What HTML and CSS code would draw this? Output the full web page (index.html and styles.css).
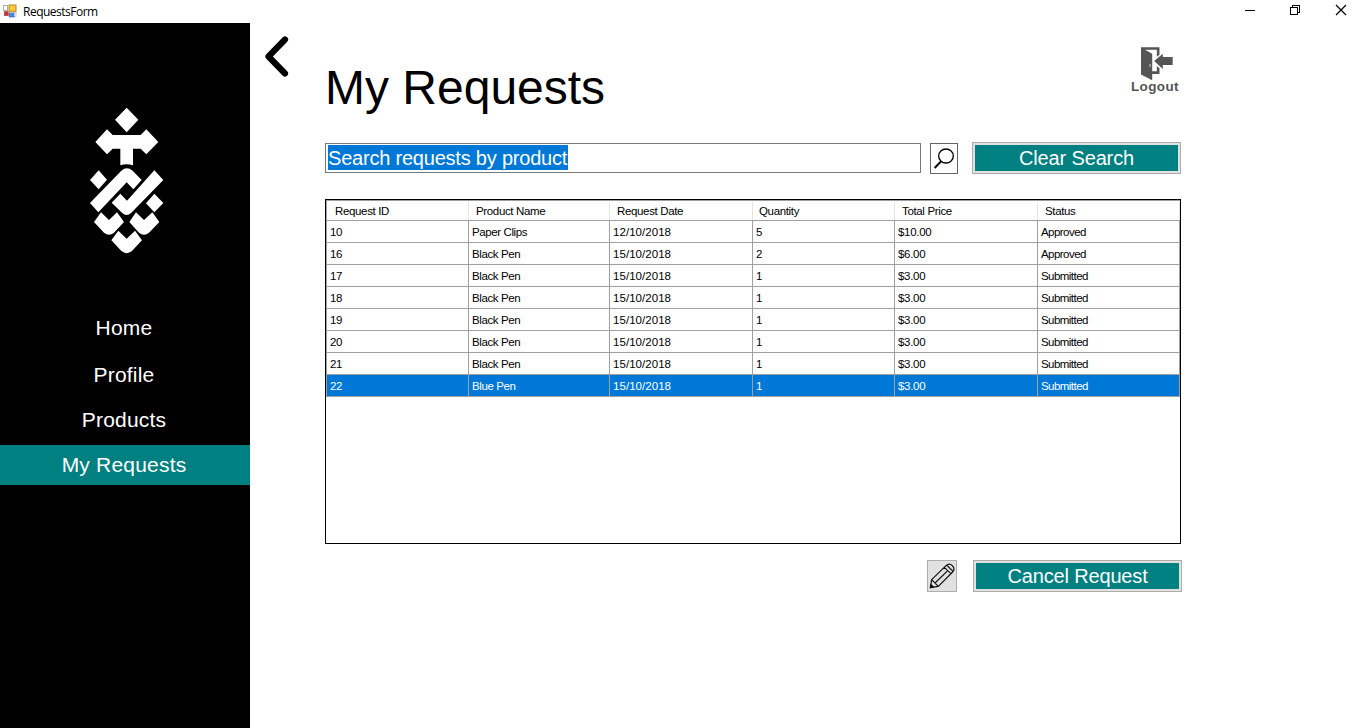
FILE: index.html
```html
<!DOCTYPE html>
<html lang="en">
<head>
<meta charset="utf-8">
<title>RequestsForm</title>
<link rel="stylesheet" href="styles.css">
</head>
<body>
<header class="titlebar">
  <svg class="app-icon" viewBox="0 0 42 42" width="14" height="14">
    <rect x="1.500" y="4.500" width="12" height="15" fill="#fff" stroke="#aaa" stroke-width="3"/>
    <rect x="4" y="23" width="12" height="12" fill="#d32f2a" stroke="#a9423e" stroke-width="2"/>
    <rect x="18" y="3" width="21" height="19" fill="#f8c93c" stroke="#b98a22" stroke-width="3"/>
    <rect x="18" y="26" width="21" height="12" fill="#fff" stroke="#aaa" stroke-width="2"/>
    <rect x="19" y="28" width="14" height="11" fill="#4c8cf0" stroke="#3465c4" stroke-width="2"/>
  </svg>
  <span class="app-name">RequestsForm</span>
  <svg class="window-controls" viewBox="0 0 106 22" width="106" height="22" fill="none" stroke="#000" shape-rendering="crispEdges">
    <path d="M0 10.500H10"/>
    <path d="M45.500 7.500h7v7h-7zM47.500 7.500v-2h7v7h-2"/>
    <path d="M91 5l10 10M101 5l-10 10" shape-rendering="auto" stroke-width="1.200"/>
  </svg>
</header>
<div class="window">
  <aside class="sidebar">
    <svg class="logo" viewBox="0 0 300 480" width="100" height="160" fill="#fff">
      <path d="M140 23L175 59L140 97L105 59Z"/>
      <path d="M46 126L81 88L98 105H182L199 88L235 126L199 163L182 146H159V196Q140 190 121 196V146H98L81 163Z"/>
      <path d="M56 211L81 239L56 268L30 240Z"/>
      <path d="M30 309L124 212Q140 198 158 212L185 240L160 268L140 247L55 337Z"/>
      <path d="M223 211L250 240L154 338Q140 352 126 338L95 308L121 281L141 302Z"/>
      <path d="M223 281L250 309L223 337L198 310Z"/>
      <path d="M63 337L87 360L111 337L132 366L102 398Q87 410 72 398L42 366Z"/>
      <path d="M168 337L192 360L217 337L238 366L207 398Q192 410 177 398L148 366Z"/>
      <path d="M115 392L140 416L165 392L186 421L155 454Q140 465 125 454L94 421Z"/>
    </svg>
    <nav class="nav">
      <a class="nav-item nav-home">Home</a>
      <a class="nav-item">Profile</a>
      <a class="nav-item">Products</a>
      <a class="nav-item active">My Requests</a>
    </nav>
  </aside>
  <main class="content">
    <svg class="back" viewBox="0 0 25 42" width="25" height="42" fill="none" stroke="#000" stroke-width="6.200" stroke-linecap="round" stroke-linejoin="round"><path d="M21 3.500L4.500 20.500L21 37.500"/></svg>
    <div class="panel">
      <div class="heading">
        <h1>My Requests</h1>
        <div class="logout">
          <svg viewBox="0 0 100 102" width="33" height="34" fill="#555">
            <path d="M3 0H59V23L51 29V8H15L37 20V73H51V57L59 64V81H37V100L3 83Z"/>
            <path d="M43 42L69 20V30H99V54H69V66Z"/>
            <path d="M29 51h3v9h-3z" fill="#ccc"/>
          </svg>
          <span>Logout</span>
        </div>
      </div>
      <div class="search-row">
        <div class="search-box"><span class="selection">Search requests by product</span></div>
        <div class="search-button">
          <svg viewBox="0 0 84 90" width="28" height="30" fill="none" stroke="#000" stroke-width="4"><ellipse cx="48" cy="39" rx="22" ry="21"/><path d="M33 55L14 75" stroke-width="6"/></svg>
        </div>
        <div class="button">Clear Search</div>
      </div>
      <table class="grid">
        <colgroup><col class="c1"><col class="c2"><col class="c3"><col class="c4"><col class="c5"><col class="c6"></colgroup>
        <thead><tr><th>Request ID</th><th>Product Name</th><th>Request Date</th><th>Quantity</th><th>Total Price</th><th>Status</th></tr></thead>
        <tbody>
          <tr><td>10</td><td>Paper Clips</td><td>12/10/2018</td><td>5</td><td>$10.00</td><td>Approved</td></tr>
          <tr><td>16</td><td>Black Pen</td><td>15/10/2018</td><td>2</td><td>$6.00</td><td>Approved</td></tr>
          <tr><td>17</td><td>Black Pen</td><td>15/10/2018</td><td>1</td><td>$3.00</td><td>Submitted</td></tr>
          <tr><td>18</td><td>Black Pen</td><td>15/10/2018</td><td>1</td><td>$3.00</td><td>Submitted</td></tr>
          <tr><td>19</td><td>Black Pen</td><td>15/10/2018</td><td>1</td><td>$3.00</td><td>Submitted</td></tr>
          <tr><td>20</td><td>Black Pen</td><td>15/10/2018</td><td>1</td><td>$3.00</td><td>Submitted</td></tr>
          <tr><td>21</td><td>Black Pen</td><td>15/10/2018</td><td>1</td><td>$3.00</td><td>Submitted</td></tr>
          <tr class="selected"><td>22</td><td>Blue Pen</td><td>15/10/2018</td><td>1</td><td>$3.00</td><td>Submitted</td></tr>
        </tbody>
      </table>
      <div class="grid-rest"></div>
      <div class="actions">
        <div class="edit-button">
          <svg viewBox="0 0 84 90" width="28" height="30" fill="none" stroke="#111" stroke-width="3.600" stroke-linejoin="round"><path d="M7 80L11 56L54 14Q64 5 73 14Q82 23 74 33L31 76ZM11 56L31 76M49 19L69 38M56 12L75 31M21 66L60 28"/><path d="M7 80l2-9l7 7z" fill="#111"/></svg>
        </div>
        <div class="button cancel">Cancel Request</div>
      </div>
    </div>
  </main>
</div>
</body>
</html>
```
FILE: styles.css
```css
* { box-sizing: border-box; }
body {
  margin: 0;
  width: 1366px;
  height: 728px;
  overflow: hidden;
  background: #fff;
  color: #000;
  font-family: "Liberation Sans", Arial, sans-serif;
}
svg { display: block; flex: none; }
.titlebar {
  display: flex;
  height: 23px;
  padding: 0 15px 0 3px;
}
.app-icon { margin-top: 4px; }
.app-name {
  margin-left: 6px;
  font: 12px/23px "Open Sans", "Noto Sans", sans-serif;
  letter-spacing: -0.5px;
}
.window-controls { margin-left: auto; }
.window { display: flex; height: 705px; }
.sidebar { width: 250px; background: #000; }
.logo { margin: 77px 0 0 80px; }
.nav { margin-top: 48px; }
.nav-item {
  display: block;
  height: 40px;
  margin-bottom: 5px;
  padding-right: 2px;
  line-height: 40px;
  font-size: 21px;
  letter-spacing: 0.2px;
  text-align: center;
  color: #fff;
}
.nav-home { margin-bottom: 7px; }
.active { background: #008080; }
.content { display: flex; padding-left: 14px; }
.back { margin-top: 13px; }
.panel { width: 858px; margin-left: 36px; }
.heading {
  display: flex;
  justify-content: space-between;
  height: 119px;
}
h1 {
  margin: 37px 0 0;
  font-weight: 400;
  font-size: 48px;
  line-height: 56px;
}
.logout {
  display: flex;
  flex-direction: column;
  width: 52px;
  margin-top: 24px;
  color: #555;
  font-weight: 700;
  font-size: 13.5px;
  line-height: 15px;
  letter-spacing: 0.35px;
}
.logout svg { margin-left: 9px; }
.logout span { margin-top: -2px; }
.search-row { display: flex; height: 57px; }
.search-box {
  width: 596px;
  height: 30px;
  margin-top: 1px;
  padding: 1px 2px;
  border: 1px solid #7a7a7a;
}
.selection {
  display: block;
  width: 240px;
  height: 25px;
  background: #0078d7;
  color: #fff;
  font-size: 20px;
  line-height: 26px;
  letter-spacing: -0.21px;
  white-space: nowrap;
}
.search-button {
  width: 28px;
  height: 31px;
  margin: 1px 14px 0 9px;
  border: 1px solid #646464;
}
.search-button svg { margin: -1px; }
.button {
  width: 209px;
  height: 32px;
  border: 1px solid #adadad;
  outline: 2px solid #e1e1e1;
  outline-offset: -3px;
  background: #008080;
  color: #fff;
  font-size: 20px;
  line-height: 30px;
  letter-spacing: -0.15px;
  text-align: center;
}
.grid {
  width: 856px;
  border: 1px solid #000;
  border-bottom: 0;
  box-shadow: inset 1px 1px #a0a0a0;
  border-spacing: 0;
  table-layout: fixed;
  font-size: 11.5px;
}
.c1 { width: 143px; }
.c2 { width: 141px; }
.c3 { width: 143px; }
.c4 { width: 142px; }
.c5 { width: 143px; }
.c6 { width: 142px; }
.grid th {
  height: 21px;
  padding: 2px 0 0 7px;
  border-bottom: 1px solid #a0a0a0;
  background: linear-gradient(#e5e5e5, #e5e5e5) right 2px / 1px 18px no-repeat;
  font-weight: 400;
  line-height: 18px;
  letter-spacing: -0.35px;
  text-align: left;
}
.grid th:first-child { padding-left: 9px; }
.grid th:nth-child(4) { padding-left: 6px; }
.grid td {
  height: 22px;
  padding: 1px 0 0 3px;
  border: solid #a0a0a0;
  border-width: 0 1px 1px 0;
  line-height: 20px;
  letter-spacing: -0.3px;
}
.grid td:first-child { border-left-width: 1px; }
.grid td:nth-child(2) { letter-spacing: -0.4px; }
.grid td:nth-child(3) { letter-spacing: 0.05px; }
.grid td:nth-child(6) { letter-spacing: -0.55px; }
.selected td { background: #0078d7; color: #fff; }
.grid-rest {
  width: 856px;
  height: 147px;
  border: 1px solid #000;
  border-top: 0;
}
.actions { display: flex; margin: 16px 0 0 602px; }
.edit-button {
  width: 30px;
  height: 32px;
  border: 1px solid #adadad;
  background: #e1e1e1;
}
.cancel { margin-left: 16px; }
```
